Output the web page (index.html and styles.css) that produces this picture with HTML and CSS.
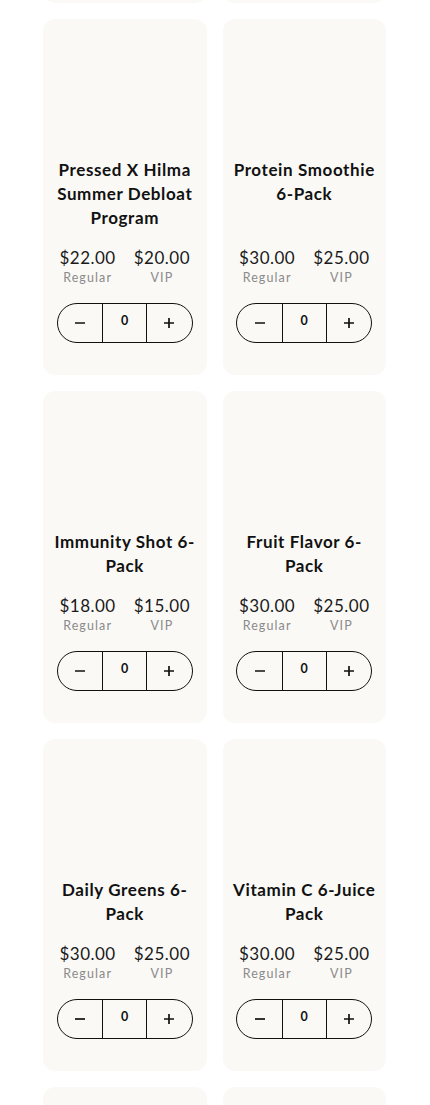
FILE: index.html
```html
<!DOCTYPE html>
<html lang="en">
<head>
    <meta charset="UTF-8">
    <meta name="viewport" content="width=device-width, initial-scale=1.0">
    <title>Shop</title>
    <link rel="stylesheet" href="styles.css">
</head>
<body>
    <div class="product-grid">
        <div class="card">
            <div class="card-image"></div>
            <h3 class="card-title">Celery Juice 6-Pack</h3>
            <div class="card-bottom">
                <div class="prices">
                    <div class="price"><span class="amount">$30.00</span><span class="label">Regular</span></div>
                    <div class="price"><span class="amount">$25.00</span><span class="label">VIP</span></div>
                </div>
                <div class="stepper">
                    <button class="step minus"><svg viewBox="0 0 12 12"><path d="M1 6h10"/></svg></button>
                    <span class="qty">0</span>
                    <button class="step plus"><svg viewBox="0 0 12 12"><path d="M1 6h10M6 1v10"/></svg></button>
                </div>
            </div>
        </div>
        <div class="card">
            <div class="card-image"></div>
            <h3 class="card-title">Cold Brew 6-Pack</h3>
            <div class="card-bottom">
                <div class="prices">
                    <div class="price"><span class="amount">$30.00</span><span class="label">Regular</span></div>
                    <div class="price"><span class="amount">$25.00</span><span class="label">VIP</span></div>
                </div>
                <div class="stepper">
                    <button class="step minus"><svg viewBox="0 0 12 12"><path d="M1 6h10"/></svg></button>
                    <span class="qty">0</span>
                    <button class="step plus"><svg viewBox="0 0 12 12"><path d="M1 6h10M6 1v10"/></svg></button>
                </div>
            </div>
        </div>

        <div class="card">
            <div class="card-image"></div>
            <h3 class="card-title">Pressed X Hilma Summer Debloat Program</h3>
            <div class="card-bottom">
                <div class="prices">
                    <div class="price"><span class="amount">$22.00</span><span class="label">Regular</span></div>
                    <div class="price"><span class="amount">$20.00</span><span class="label">VIP</span></div>
                </div>
                <div class="stepper">
                    <button class="step minus"><svg viewBox="0 0 12 12"><path d="M1 6h10"/></svg></button>
                    <span class="qty">0</span>
                    <button class="step plus"><svg viewBox="0 0 12 12"><path d="M1 6h10M6 1v10"/></svg></button>
                </div>
            </div>
        </div>
        <div class="card">
            <div class="card-image"></div>
            <h3 class="card-title">Protein Smoothie 6-Pack</h3>
            <div class="card-bottom">
                <div class="prices">
                    <div class="price"><span class="amount">$30.00</span><span class="label">Regular</span></div>
                    <div class="price"><span class="amount">$25.00</span><span class="label">VIP</span></div>
                </div>
                <div class="stepper">
                    <button class="step minus"><svg viewBox="0 0 12 12"><path d="M1 6h10"/></svg></button>
                    <span class="qty">0</span>
                    <button class="step plus"><svg viewBox="0 0 12 12"><path d="M1 6h10M6 1v10"/></svg></button>
                </div>
            </div>
        </div>

        <div class="card">
            <div class="card-image"></div>
            <h3 class="card-title">Immunity Shot 6-Pack</h3>
            <div class="card-bottom">
                <div class="prices">
                    <div class="price"><span class="amount">$18.00</span><span class="label">Regular</span></div>
                    <div class="price"><span class="amount">$15.00</span><span class="label">VIP</span></div>
                </div>
                <div class="stepper">
                    <button class="step minus"><svg viewBox="0 0 12 12"><path d="M1 6h10"/></svg></button>
                    <span class="qty">0</span>
                    <button class="step plus"><svg viewBox="0 0 12 12"><path d="M1 6h10M6 1v10"/></svg></button>
                </div>
            </div>
        </div>
        <div class="card">
            <div class="card-image"></div>
            <h3 class="card-title">Fruit Flavor 6-Pack</h3>
            <div class="card-bottom">
                <div class="prices">
                    <div class="price"><span class="amount">$30.00</span><span class="label">Regular</span></div>
                    <div class="price"><span class="amount">$25.00</span><span class="label">VIP</span></div>
                </div>
                <div class="stepper">
                    <button class="step minus"><svg viewBox="0 0 12 12"><path d="M1 6h10"/></svg></button>
                    <span class="qty">0</span>
                    <button class="step plus"><svg viewBox="0 0 12 12"><path d="M1 6h10M6 1v10"/></svg></button>
                </div>
            </div>
        </div>

        <div class="card">
            <div class="card-image"></div>
            <h3 class="card-title">Daily Greens 6-Pack</h3>
            <div class="card-bottom">
                <div class="prices">
                    <div class="price"><span class="amount">$30.00</span><span class="label">Regular</span></div>
                    <div class="price"><span class="amount">$25.00</span><span class="label">VIP</span></div>
                </div>
                <div class="stepper">
                    <button class="step minus"><svg viewBox="0 0 12 12"><path d="M1 6h10"/></svg></button>
                    <span class="qty">0</span>
                    <button class="step plus"><svg viewBox="0 0 12 12"><path d="M1 6h10M6 1v10"/></svg></button>
                </div>
            </div>
        </div>
        <div class="card">
            <div class="card-image"></div>
            <h3 class="card-title">Vitamin C 6-Juice Pack</h3>
            <div class="card-bottom">
                <div class="prices">
                    <div class="price"><span class="amount">$30.00</span><span class="label">Regular</span></div>
                    <div class="price"><span class="amount">$25.00</span><span class="label">VIP</span></div>
                </div>
                <div class="stepper">
                    <button class="step minus"><svg viewBox="0 0 12 12"><path d="M1 6h10"/></svg></button>
                    <span class="qty">0</span>
                    <button class="step plus"><svg viewBox="0 0 12 12"><path d="M1 6h10M6 1v10"/></svg></button>
                </div>
            </div>
        </div>

        <div class="card">
            <div class="card-image"></div>
        </div>
        <div class="card">
            <div class="card-image"></div>
        </div>
    </div>
</body>
</html>
```

FILE: styles.css
```css
body {
    margin: 0;
    background: #ffffff;
    font-family: Lato, "Noto Sans", sans-serif;
    color: #111111;
    overflow: hidden;
    height: 1105px;
}

.product-grid {
    display: grid;
    grid-template-columns: 1fr 1fr;
    gap: 16px;
    padding: 0 44px 0 43px;
    margin-top: -329px;
}

.card {
    background: #faf9f6;
    border-radius: 12px;
    display: flex;
    flex-direction: column;
    align-items: center;
    padding: 0 8px 32px;
    text-align: center;
}

.card-image {
    width: 100%;
    height: 139px;
}

.card-title {
    margin: 0;
    font-size: 17px;
    font-weight: 700;
    line-height: 24px;
    letter-spacing: 0.6px;
}

.card-bottom {
    margin-top: auto;
    padding-top: 17px;
    display: flex;
    flex-direction: column;
    align-items: center;
}

.prices {
    display: flex;
    gap: 18px;
}

.price {
    display: flex;
    flex-direction: column;
    align-items: center;
}

.amount {
    font-size: 17px;
    line-height: 22px;
    color: #1a1a1a;
    letter-spacing: 0.5px;
}

.label {
    font-size: 12.5px;
    line-height: 18px;
    color: #8a8a8a;
    letter-spacing: 1.1px;
}

.stepper {
    margin-top: 16px;
    width: 136px;
    height: 40px;
    box-sizing: border-box;
    border: 1.5px solid #111111;
    border-radius: 20px;
    display: grid;
    grid-template-columns: 1fr 1fr 1fr;
    overflow: hidden;
}

.step {
    background: none;
    border: none;
    padding: 0;
    display: flex;
    align-items: center;
    justify-content: center;
    cursor: pointer;
}

.step svg {
    width: 12px;
    height: 12px;
    fill: none;
    stroke: #111111;
    stroke-width: 1.7;
}

.qty {
    border-left: 1.5px solid #111111;
    border-right: 1.5px solid #111111;
    font-size: 12.5px;
    font-weight: 700;
    line-height: 33px;
}
```
